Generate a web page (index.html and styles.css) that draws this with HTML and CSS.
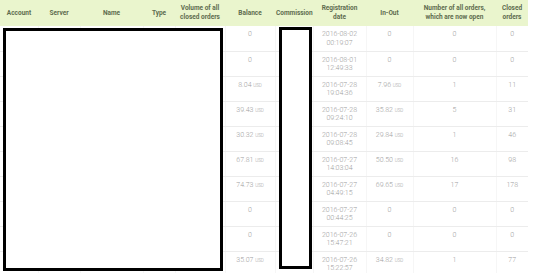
FILE: index.html
```html
<!DOCTYPE html>
<html>
<head>
<meta charset="utf-8">
<link rel="stylesheet" href="styles.css">
</head>
<body>
<div class="wrap">
<table class="grid">
<colgroup>
<col style="width:38px"><col style="width:42px"><col style="width:63px"><col style="width:32px"><col style="width:50px"><col style="width:50px"><col style="width:38px"><col style="width:53px"><col style="width:47px"><col style="width:83px"><col style="width:32px">
</colgroup>
<thead>
<tr>
<th>Account</th><th>Server</th><th>Name</th><th>Type</th><th>Volume of all<br>closed orders</th><th>Balance</th><th>Commission</th><th>Registration<br>date</th><th>In-Out</th><th>Number of all orders,<br>which are now open</th><th>Closed<br>orders</th>
</tr>
</thead>
<tbody>
<tr><td></td><td></td><td></td><td></td><td></td><td>0</td><td></td><td>2016-08-02<br>00:19:07</td><td>0</td><td>0</td><td>0</td></tr>
<tr><td></td><td></td><td></td><td></td><td></td><td>0</td><td></td><td>2016-08-01<br>12:49:33</td><td>0</td><td>0</td><td>0</td></tr>
<tr><td></td><td></td><td></td><td></td><td></td><td>8.04 <span class="cur">USD</span></td><td></td><td>2016-07-28<br>19:04:36</td><td>7.96 <span class="cur">USD</span></td><td>1</td><td>11</td></tr>
<tr><td></td><td></td><td></td><td></td><td></td><td>39.43 <span class="cur">USD</span></td><td></td><td>2016-07-28<br>09:24:10</td><td>35.82 <span class="cur">USD</span></td><td>5</td><td>31</td></tr>
<tr><td></td><td></td><td></td><td></td><td></td><td>30.32 <span class="cur">USD</span></td><td></td><td>2016-07-28<br>09:08:45</td><td>29.84 <span class="cur">USD</span></td><td>1</td><td>46</td></tr>
<tr><td></td><td></td><td></td><td></td><td></td><td>67.81 <span class="cur">USD</span></td><td></td><td>2016-07-27<br>14:03:04</td><td>50.50 <span class="cur">USD</span></td><td>16</td><td>98</td></tr>
<tr><td></td><td></td><td></td><td></td><td></td><td>74.73 <span class="cur">USD</span></td><td></td><td>2016-07-27<br>04:49:15</td><td>69.65 <span class="cur">USD</span></td><td>17</td><td>178</td></tr>
<tr><td></td><td></td><td></td><td></td><td></td><td>0</td><td></td><td>2016-07-27<br>00:44:25</td><td>0</td><td>0</td><td>0</td></tr>
<tr><td></td><td></td><td></td><td></td><td></td><td>0</td><td></td><td>2016-07-26<br>15:47:21</td><td>0</td><td>0</td><td>0</td></tr>
<tr><td></td><td></td><td></td><td></td><td></td><td>35.07 <span class="cur">USD</span></td><td></td><td>2016-07-26<br>15:22:57</td><td>34.82 <span class="cur">USD</span></td><td>1</td><td>77</td></tr>
</tbody>
</table>
<div class="redact redact-left"></div>
<div class="redact redact-comm"></div>
</div>
</body>
</html>
```
FILE: styles.css
```css
html, body {
  margin: 0;
  padding: 0;
  background: #fff;
  overflow: hidden;
}
.wrap {
  position: relative;
  width: 540px;
  height: 273px;
}
.grid {
  border-collapse: collapse;
  table-layout: fixed;
  width: 528px;
  font-family: Roboto, "Liberation Sans", sans-serif;
}
.grid th {
  background: #eaf5cd;
  color: #5e6c4f;
  font-weight: 700;
  font-size: 6.5px;
  line-height: 9px;
  height: 26px;
  padding: 0 1px;
  text-align: center;
  vertical-align: middle;
  border: none;
}
.grid td {
  height: 25px;
  padding: 4px 1px 0;
  box-sizing: border-box;
  font-size: 7px;
  line-height: 8.5px;
  color: #a0a0a0;
  font-weight: 300;
  text-align: center;
  vertical-align: top;
  border-bottom: 1px solid #ececec;
  border-right: 1px solid #f6f6f6;
}
.grid tr td:last-child {
  border-right: none;
}
.cur {
  font-size: 4.5px;
  text-transform: uppercase;
}
.redact {
  position: absolute;
  background: #fff;
  border: 3px solid #000;
  box-sizing: border-box;
}
.redact-left {
  left: 3px;
  top: 28px;
  width: 220px;
  height: 243px;
}
.redact-comm {
  left: 279px;
  top: 27px;
  width: 33px;
  height: 242px;
}
```
